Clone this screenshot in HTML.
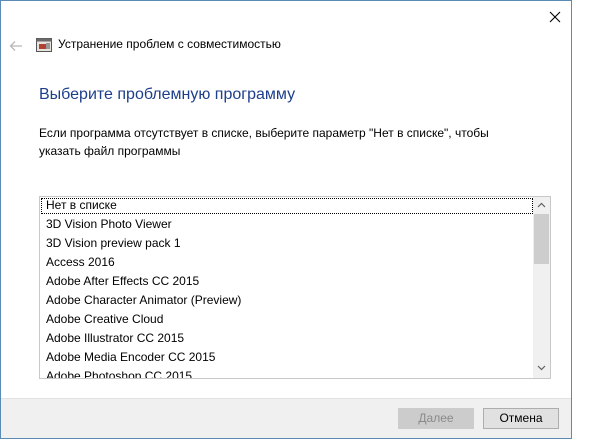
<!DOCTYPE html>
<html><head><meta charset="utf-8"><style>
*{margin:0;padding:0;box-sizing:border-box}
body{width:601px;height:440px;background:#fff;position:relative;overflow:hidden;font-family:"Segoe UI","Liberation Sans","DejaVu Sans",sans-serif;font-size:12px;color:#000}
.win{position:absolute;left:0;top:0;width:572px;height:439px;border:1px solid #5b8bb5;background:#fff}
.abs{position:absolute;white-space:nowrap}
.list{position:absolute;left:39px;top:196px;width:512px;height:183px;border:1px solid #c8c8c8;overflow:hidden}
.item{position:absolute;left:6px;height:19px;line-height:17px}
.focus{position:absolute;left:1px;top:1px;width:492px;height:16px;border:1px dotted #000}
.sb{position:absolute;right:0;top:0;width:17px;height:181px;background:#f0f0f0}
.thumb{position:absolute;left:1px;top:17px;width:15px;height:50px;background:#cdcdcd}
.footer{position:absolute;left:1px;top:398px;width:570px;height:40px;background:#f0f0f0;border-top:1px solid #e3e3e3}
.btn{position:absolute;top:408px;width:76px;height:21px;text-align:center;line-height:19px}
</style></head><body>
<div class="win"></div>
<svg class="abs" style="left:548px;top:10px" width="14" height="14" viewBox="0 0 14 14"><path d="M2 2L12 12M12 2L2 12" stroke="#000" stroke-width="1.1"/></svg>
<svg class="abs" style="left:9px;top:40px" width="14" height="12" viewBox="0 0 14 12"><path d="M13 6H2M6 1.5L1.5 6L6 10.5" stroke="#b8b8b8" stroke-width="1.3" fill="none"/></svg>
<svg class="abs" style="left:36px;top:38px" width="16" height="14" viewBox="0 0 16 14"><rect x="0.5" y="0.5" width="15" height="13" fill="#e8e4dc" stroke="#555"/><rect x="0.5" y="0.5" width="15" height="3" fill="#6a6a6a"/><rect x="3" y="6" width="7" height="5" fill="#b04030"/><rect x="10" y="5" width="4" height="6" fill="#999"/></svg>
<div class="abs" style="left:58px;top:37px;font-size:12px">Устранение проблем с совместимостью</div>
<div class="abs" style="left:39px;top:86px;font-size:16px;color:#1e3e8c">Выберите проблемную программу</div>
<div class="abs" style="left:39px;top:124px;line-height:18px">Если программа отсутствует в списке, выберите параметр "Нет в списке", чтобы<br>указать файл программы</div>
<div class="list">
<div class="focus"></div>
<div class="item" style="top:0">Нет в списке</div>
<div class="item" style="top:19px">3D Vision Photo Viewer</div>
<div class="item" style="top:38px">3D Vision preview pack 1</div>
<div class="item" style="top:57px">Access 2016</div>
<div class="item" style="top:76px">Adobe After Effects CC 2015</div>
<div class="item" style="top:95px">Adobe Character Animator (Preview)</div>
<div class="item" style="top:114px">Adobe Creative Cloud</div>
<div class="item" style="top:133px">Adobe Illustrator CC 2015</div>
<div class="item" style="top:152px">Adobe Media Encoder CC 2015</div>
<div class="item" style="top:171px">Adobe Photoshop CC 2015</div>
<div class="sb"><div class="thumb"></div>
<svg class="abs" style="left:4px;top:5px" width="9" height="6" viewBox="0 0 9 6"><path d="M1 5L4.5 1.5L8 5" stroke="#606060" fill="none" stroke-width="1.2"/></svg>
<svg class="abs" style="left:4px;top:168px" width="9" height="6" viewBox="0 0 9 6"><path d="M1 1L4.5 4.5L8 1" stroke="#606060" fill="none" stroke-width="1.2"/></svg>
</div>
</div>
<div class="footer"></div>
<div class="btn" style="left:398px;background:#cccccc;border:1px solid #cccccc;color:#8a8a8a"><u>Д</u>алее</div>
<div class="btn" style="left:483px;background:#e1e1e1;border:1px solid #adadad">Отмена</div>
</body></html>
